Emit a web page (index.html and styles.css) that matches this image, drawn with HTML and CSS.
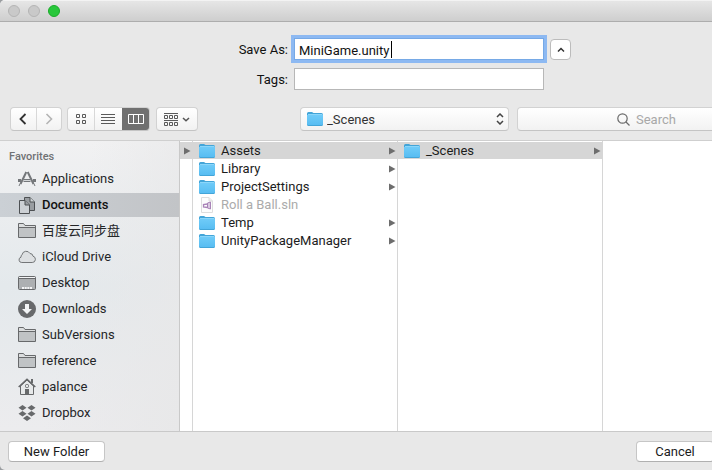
FILE: index.html
```html
<!DOCTYPE html>
<html lang="en">
<head>
<meta charset="utf-8">
<title>Save</title>
<link rel="stylesheet" href="styles.css">
</head>
<body>
<svg class="defs" aria-hidden="true">
  <defs>
    <linearGradient id="blue" x1="0" y1="0" x2="0" y2="1"><stop offset="0" stop-color="#6fcbf8"/><stop offset="1" stop-color="#58bdf2"/></linearGradient>
    <symbol id="folder" viewBox="0 0 16 14">
      <path d="M0 1.5Q0 0 1.5 0H5L6.5 1H14.5Q16 1 16 2.5V12.5Q16 14 14.5 14H1.5Q0 14 0 12.5Z" fill="#43a5d8"/>
      <path d="M0 3H16V12Q16 13 15 13H1Q0 13 0 12Z" fill="url(#blue)"/>
      <path d="M1 2.5H15.5" stroke="#8bd6fa"/>
    </symbol>
    <symbol id="gray-folder" viewBox="0 0 18 16">
      <path d="M.5 14.5V.5H5.5L7 2.5H17.5V14.5Z" fill="#dcdedf" stroke="#67696b"/>
      <path d="M1 5H17V14H1Z" fill="#c0c3c5"/>
      <path d="M.5 4.5H17.5" stroke="#67696b"/>
    </symbol>
    <symbol id="arrow" viewBox="0 0 7 8"><path d="M0 .5L6.500 4L0 7.500Z" fill="#6d6d6d"/></symbol>
  </defs>
</svg>
<div class="window">
  <header class="titlebar">
    <button class="light" aria-label="Close"></button>
    <button class="light" aria-label="Minimize"></button>
    <button class="light zoom" aria-label="Zoom"></button>
  </header>

  <form class="fields">
    <label for="name">Save As:</label>
    <div class="name-box"><input id="name" class="name" type="text" value="MiniGame.unity"><span class="caret"></span></div>
    <button class="collapse" type="button" aria-label="Collapse"><svg width="8" height="5" viewBox="0 0 8 5"><path d="M1 4.5L4 1.5L7 4.5" fill="none" stroke="#333" stroke-width="1.5"/></svg></button>
    <label for="tags">Tags:</label>
    <input id="tags" class="tags" type="text">
  </form>

  <nav class="toolbar">
    <div class="group nav">
      <button class="tool" aria-label="Back"><svg width="8" height="12" viewBox="0 0 8 12"><path d="M6.5 1L1.5 6L6.5 11" fill="none" stroke="#333" stroke-width="1.8"/></svg></button>
      <button class="tool" aria-label="Forward"><svg width="8" height="12" viewBox="0 0 8 12"><path d="M1.5 1L6.5 6L1.5 11" fill="none" stroke="#b4b4b4" stroke-width="1.6"/></svg></button>
    </div>
    <div class="group views">
      <button class="tool" aria-label="Icons"><svg width="10" height="10" viewBox="0 0 10 10" fill="none" stroke="#5a5a5a"><path d="M.5 .5h3v3h-3zM6.5 .5h3v3h-3zM.5 6.5h3v3h-3zM6.5 6.5h3v3h-3z"/></svg></button>
      <button class="tool" aria-label="List"><svg width="14" height="11" viewBox="0 0 14 11" stroke="#5a5a5a"><path d="M0 .5h14M0 3.5h14M0 6.5h14M0 9.5h14"/></svg></button>
      <button class="tool on" aria-label="Columns"><svg width="16" height="10" viewBox="0 0 16 10" fill="none" stroke="#fff"><path d="M.5 .5h15v9h-15zM5.5 1v8M10.5 1v8"/></svg></button>
    </div>
    <div class="group arrange">
      <button class="tool" aria-label="Arrange"><svg width="14" height="13" viewBox="0 0 14 13" fill="none" stroke="#5a5a5a"><path d="M0 .5h14M0 7.5h14M.5 2.5h3v3h-3zM5.5 2.5h3v3h-3zM10.5 2.5h3v3h-3zM.5 9.5h3v3h-3zM5.5 9.5h3v3h-3zM10.5 9.5h3v3h-3z"/></svg><svg width="8" height="5" viewBox="0 0 8 5"><path d="M1 1L4 3.8L7 1" fill="none" stroke="#555" stroke-width="1.5"/></svg></button>
    </div>
    <div class="location">
      <svg class="location-icon" width="16" height="14"><use href="#folder"/></svg>
      <select aria-label="Location"><option>_Scenes</option></select>
      <svg class="stepper" width="8" height="12" viewBox="0 0 8 12" fill="none" stroke="#444" stroke-width="1.5"><path d="M1 4L4 1L7 4M1 8L4 11L7 8"/></svg>
    </div>
    <label class="search">
      <svg width="13" height="13" viewBox="0 0 13 13" fill="none" stroke="#6a6a6a" stroke-width="1.2"><circle cx="5.5" cy="5.5" r="4.7"/><path d="M9 9L12.5 12.5"/></svg>
      <input type="search" placeholder="Search" aria-label="Search">
    </label>
  </nav>

  <main class="browser">
    <aside class="sidebar">
      <h2>Favorites</h2>
      <a class="place" href="#"><svg width="18" height="16" viewBox="0 0 18 16" fill="none" stroke="#74777a"><path d="M8.300 1L2.500 13M9.700 1L15.500 13" stroke-width="2"/><path d="M0 9.500H3M5.500 9.500H12.500M15 9.500H18" stroke-width="3"/><path d="M5.500 9.500H12.500" stroke="#d4d7d9"/><path d="M2.200 12.500L1 15M15.800 12.500L17 15"/></svg>Applications</a>
      <a class="place selected" href="#"><svg width="18" height="18" viewBox="0 0 18 18" stroke="#4d5053"><path d="M6.5 1.5H12L16.500 6V14.5H6.5Z" fill="#999da1"/><path d="M12 1.5V6H16.5" fill="#cfd3d6"/><path d="M1.5 4.5H7L11.5 9V17.5H1.5Z" fill="#ccd0d4"/><path d="M7 4.5V9H11.5" fill="#999da1"/></svg>Documents</a>
      <a class="place" href="#"><svg width="18" height="16"><use href="#gray-folder"/></svg><span lang="zh">百度云同步盘</span></a>
      <a class="place" href="#"><svg width="18" height="14" viewBox="0 0 18 14"><path d="M3.800 12.500H14.200A3.200 3.200 0 0 0 15 6.200A3 3 0 0 0 12 3.500A4.300 4.300 0 0 0 4 4.800A2.400 2.400 0 0 0 3 7.200A2.700 2.700 0 0 0 3.800 12.500Z" fill="#dde0e2" stroke="#737678"/></svg>iCloud Drive</a>
      <a class="place" href="#"><svg width="18" height="14" viewBox="0 0 18 14"><rect x=".5" y=".5" width="17" height="13" rx="1" fill="#adb0b2" stroke="#67696b"/><path d="M1 1.5H17" stroke="#f4f5f6"/><path d="M1 2.5H17" stroke="#67696b"/><path d="M4 12H14" stroke="#f4f5f6" stroke-width="2" stroke-dasharray="2 .67"/></svg>Desktop</a>
      <a class="place" href="#"><svg width="18" height="18" viewBox="0 0 18 18"><circle cx="9" cy="9" r="9" fill="#67696b"/><path d="M7 4H11V9H14L9 14L4 9H7Z" fill="#f2f4f5"/></svg>Downloads</a>
      <a class="place" href="#"><svg width="18" height="16"><use href="#gray-folder"/></svg>SubVersions</a>
      <a class="place" href="#"><svg width="18" height="16"><use href="#gray-folder"/></svg>reference</a>
      <a class="place" href="#"><svg width="18" height="18" viewBox="0 0 18 18" fill="none" stroke="#67696b"><path d="M2.5 8V16.5H15.5V8L9 2Z" fill="#e7e9ea"/><path d="M.7 9L9 1.3L17.3 9" stroke-width="1.6"/><path d="M14 1V5" stroke-width="2"/><rect x="7.5" y="6.5" width="3" height="3" rx="1"/><path d="M7 11H11V16H7Z" fill="#67696b" stroke="none"/></svg>palance</a>
      <a class="place" href="#"><svg width="18" height="16" viewBox="0 0 18 16" fill="#67696b"><path d="M4.5 0L8.500 2.700L4.500 5.400L.5 2.700ZM13.500 0L17.500 2.700L13.500 5.400L9.500 2.700ZM4.500 6L8.500 8.700L4.500 11.400L.5 8.700ZM13.500 6L17.500 8.700L13.500 11.400L9.500 8.700ZM9 10.500L13 13.200L9 16L5 13.200Z"/></svg>Dropbox</a>
    </aside>

    <div class="column parent"><div class="file selected"><svg class="more" width="7" height="8"><use href="#arrow"/></svg></div></div>
    <div class="column">
      <a class="file selected" href="#"><svg width="16" height="14"><use href="#folder"/></svg>Assets<svg class="more" width="7" height="8"><use href="#arrow"/></svg></a>
      <a class="file" href="#"><svg width="16" height="14"><use href="#folder"/></svg>Library<svg class="more" width="7" height="8"><use href="#arrow"/></svg></a>
      <a class="file" href="#"><svg width="16" height="14"><use href="#folder"/></svg>ProjectSettings<svg class="more" width="7" height="8"><use href="#arrow"/></svg></a>
      <a class="file dim" href="#"><svg width="16" height="16" viewBox="0 0 16 16"><path d="M2.5 .5H10L13.5 4V15.5H2.5Z" fill="#fdfdfd" stroke="#dedede"/><path d="M10 .5V4H13.5" fill="#eee" stroke="#dedede"/><path d="M8.500 6L11.500 5V12L8.500 11Z" fill="#d9c9e0" stroke="#a984b8"/><path d="M8.500 7L4.500 7.500V10L8.500 10.500" fill="none" stroke="#a984b8" stroke-width="1.3"/></svg>Roll a Ball.sln</a>
      <a class="file" href="#"><svg width="16" height="14"><use href="#folder"/></svg>Temp<svg class="more" width="7" height="8"><use href="#arrow"/></svg></a>
      <a class="file" href="#"><svg width="16" height="14"><use href="#folder"/></svg>UnityPackageManager<svg class="more" width="7" height="8"><use href="#arrow"/></svg></a>
    </div>
    <div class="column">
      <a class="file selected" href="#"><svg width="16" height="14"><use href="#folder"/></svg>_Scenes<svg class="more" width="7" height="8"><use href="#arrow"/></svg></a>
    </div>
  </main>

  <footer class="actions">
    <button class="push new">New Folder</button>
    <button class="push cancel">Cancel</button>
  </footer>
</div>
</body>
</html>
```
FILE: styles.css
```css
* { box-sizing: border-box; }

body {
  margin: 0;
  background: #9a9da0;
  color: #1c1c1c;
  font: 13px/16px Roboto, "Noto Sans CJK SC", sans-serif;
}

button, input, select { font: inherit; color: inherit; margin: 0; }
a { color: inherit; text-decoration: none; }
svg { flex: none; display: block; }
.defs { position: absolute; width: 0; height: 0; }

.window {
  display: flex;
  flex-direction: column;
  min-height: 100vh;
  overflow: hidden;
  background: #e8e8e8;
  border-radius: 5px 0 0 5px;
}

.titlebar {
  display: flex;
  align-items: center;
  gap: 8px;
  height: 22px;
  padding-left: 8px;
  background: linear-gradient(#e6e6e6, #cecece);
  border-top: 1px solid #f3f3f3;
  border-bottom: 1px solid #adadad;
}
.light {
  width: 12px;
  height: 12px;
  padding: 0;
  border: 1px solid #b4b4b4;
  border-radius: 50%;
  background: #c9c9c9;
}
.light.zoom { background: #28c73b; border-color: #1aab29; }

.fields {
  display: grid;
  grid-template-columns: 288px 250px 21px;
  column-gap: 6px;
  row-gap: 8px;
  align-items: center;
  padding: 16px 0;
  color: #111;
}
.fields label { padding-top: 2px; text-align: right; }
.fields input {
  width: 100%;
  height: 22px;
  padding: 2px 4px 0;
  border: 1px solid #b7b7b7;
  background: #fff;
  outline: none;
  display: block;
}
.name-box { position: relative; }
.fields .name { border-color: #76a9e6; box-shadow: 0 0 0 3px #8db9f2; }
.caret { position: absolute; left: 97px; top: 3px; width: 1px; height: 17px; background: #000; }
.collapse {
  display: flex;
  align-items: center;
  justify-content: center;
  height: 21px;
  padding: 0;
  border: 1px solid #bcbcbc;
  border-radius: 4px;
  background: #fff;
}

.toolbar {
  display: flex;
  padding: 1px 0 9px 10px;
  border-bottom: 1px solid #cfcfcf;
}
.group, .location, .search {
  flex: none;
  display: flex;
  height: 24px;
  border: 1px solid #d2d2d2;
  border-bottom-color: #c4c4c4;
  border-radius: 4px;
  background: linear-gradient(#fff, #f2f2f2);
}
.group { overflow: hidden; }
.tool {
  flex: 1;
  display: flex;
  align-items: center;
  justify-content: center;
  gap: 4px;
  padding: 0;
  border: 0;
  background: none;
}
.tool + .tool { border-left: 1px solid #d8d8d8; }
.tool.on { background: #707070; border-color: #707070; }
.nav { width: 52px; }
.views { width: 83px; margin-left: 5px; }
.arrange { width: 42px; margin-left: 6px; }
.location { position: relative; width: 209px; margin-left: 102px; }
.location select {
  width: 100%;
  padding: 1px 24px 0 26px;
  border: 0;
  background: none;
  appearance: none;
  color: #333;
}
.location-icon { position: absolute; left: 6px; top: 4px; }
.stepper { position: absolute; right: 4px; top: 5px; }
.search {
  width: 262px;
  margin-left: 8px;
  align-items: center;
  gap: 6px;
  padding-left: 99px;
}
.search input {
  width: 60px;
  padding: 1px 0 0;
  border: 0;
  background: none;
  appearance: none;
  outline: none;
}
.search input::placeholder { color: #a8a8a8; }

.browser { flex: 1; display: flex; background: #fff; }
.sidebar {
  flex: none;
  display: flex;
  flex-direction: column;
  gap: 2px;
  width: 180px;
  padding: 8px 0 6px;
  border-right: 1px solid #c9c9c9;
  background: linear-gradient(100deg, rgba(240, 240, 241, 0) 40%, #e8e8e9), linear-gradient(#f1f1f2, #e4e9ec 50%, #ececee);
}
.sidebar h2 {
  margin: 0;
  padding-left: 9px;
  font-size: 11px;
  line-height: 16px;
  font-weight: 500;
  color: #707274;
}
.place {
  display: flex;
  align-items: center;
  gap: 6px;
  height: 24px;
  padding-left: 18px;
  color: #242628;
}
.place.selected { background: linear-gradient(90deg, #cbd0d5, #c2c4c7); color: #111; font-weight: 500; }

.column {
  flex: none;
  display: flex;
  flex-direction: column;
  gap: 1px;
  width: 205px;
  padding-top: 1px;
  border-right: 1px solid #d6d6d6;
}
.column.parent { width: 13px; }
.file {
  display: flex;
  align-items: center;
  gap: 6px;
  height: 17px;
  padding: 0 1px 0 6px;
}
.parent .file { padding-left: 4px; }
.file.selected { background: #d6d6d6; }
.file.dim { color: #ababab; }
.more { margin-left: auto; }
.parent .more { margin-left: 0; }

.actions {
  display: flex;
  justify-content: space-between;
  padding: 9px 0 8px 8px;
  border-top: 1px solid #c9c9c9;
}
.push {
  height: 21px;
  padding: 0;
  border: 1px solid #c6c6c6;
  border-bottom-color: #b0b0b0;
  border-radius: 4px;
  background: #fff;
}
.new { width: 97px; }
.cancel { width: 78px; margin-right: -2px; }
```
